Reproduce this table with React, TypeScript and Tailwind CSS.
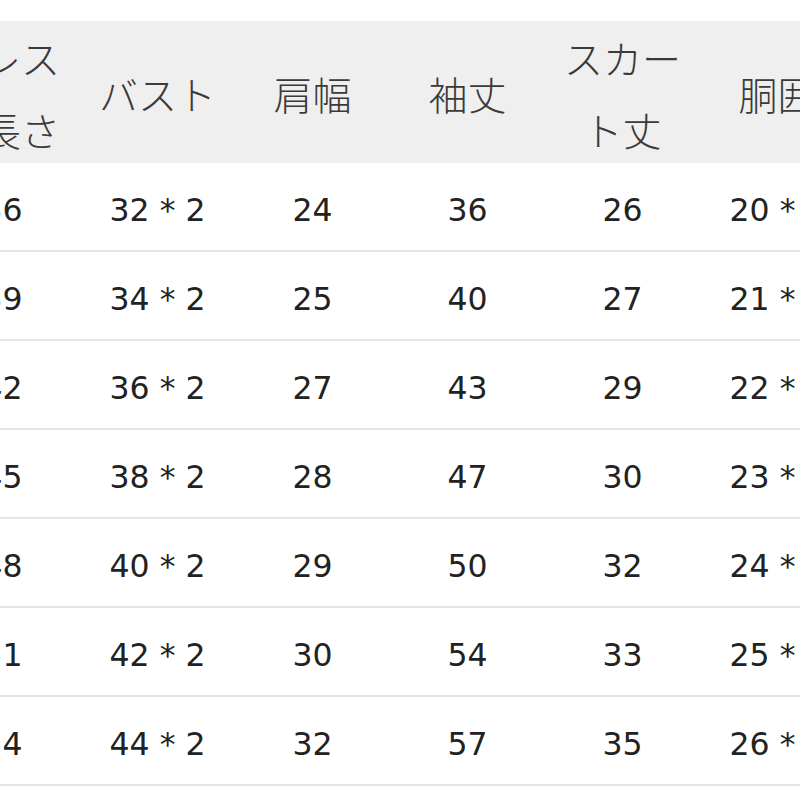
import React from 'react';

const headers: React.ReactNode[] = [
  <>ドレス<br />長さ</>,
  'バスト',
  '肩幅',
  '袖丈',
  'スカート丈',
  '胴囲',
];

const rows: string[][] = [
  ['36', '32 * 2', '24', '36', '26', '20 * 2'],
  ['39', '34 * 2', '25', '40', '27', '21 * 2'],
  ['42', '36 * 2', '27', '43', '29', '22 * 2'],
  ['45', '38 * 2', '28', '47', '30', '23 * 2'],
  ['48', '40 * 2', '29', '50', '32', '24 * 2'],
  ['51', '42 * 2', '30', '54', '33', '25 * 2'],
  ['54', '44 * 2', '32', '57', '35', '26 * 2'],
];

const App: React.FC = () => {
  return (
    <div className="w-[800px] h-[800px] overflow-hidden bg-white pt-[21px]">
      <div className="ml-[-75px] w-[930px]">
        <div className="grid grid-cols-[repeat(6,155px)] h-[142px] bg-[#efefef] text-[#3a3a3a] font-['Noto_Sans_CJK_JP',sans-serif] text-[39px] font-light">
          {headers.map((h, i) => (
            <div
              key={i}
              className={
                i === 0
                  ? 'flex items-center justify-end pr-[20px] pb-[5px] text-right leading-[72px]'
                  : 'flex items-center justify-center px-[8px] pb-[5px] text-center leading-[72px]'
              }
            >
              <div>{h}</div>
            </div>
          ))}
        </div>
        {rows.map((r, i) => (
          <div
            key={i}
            className="grid grid-cols-[repeat(6,155px)] h-[89px] border-b-2 border-[#e3e5ea] text-[#222222] font-['DejaVu_Sans',sans-serif] text-[31.5px]"
          >
            {r.map((c, j) => (
              <div key={j} className="flex items-center justify-center pt-[8px] whitespace-nowrap">
                {c}
              </div>
            ))}
          </div>
        ))}
      </div>
    </div>
  );
};

export default App;
